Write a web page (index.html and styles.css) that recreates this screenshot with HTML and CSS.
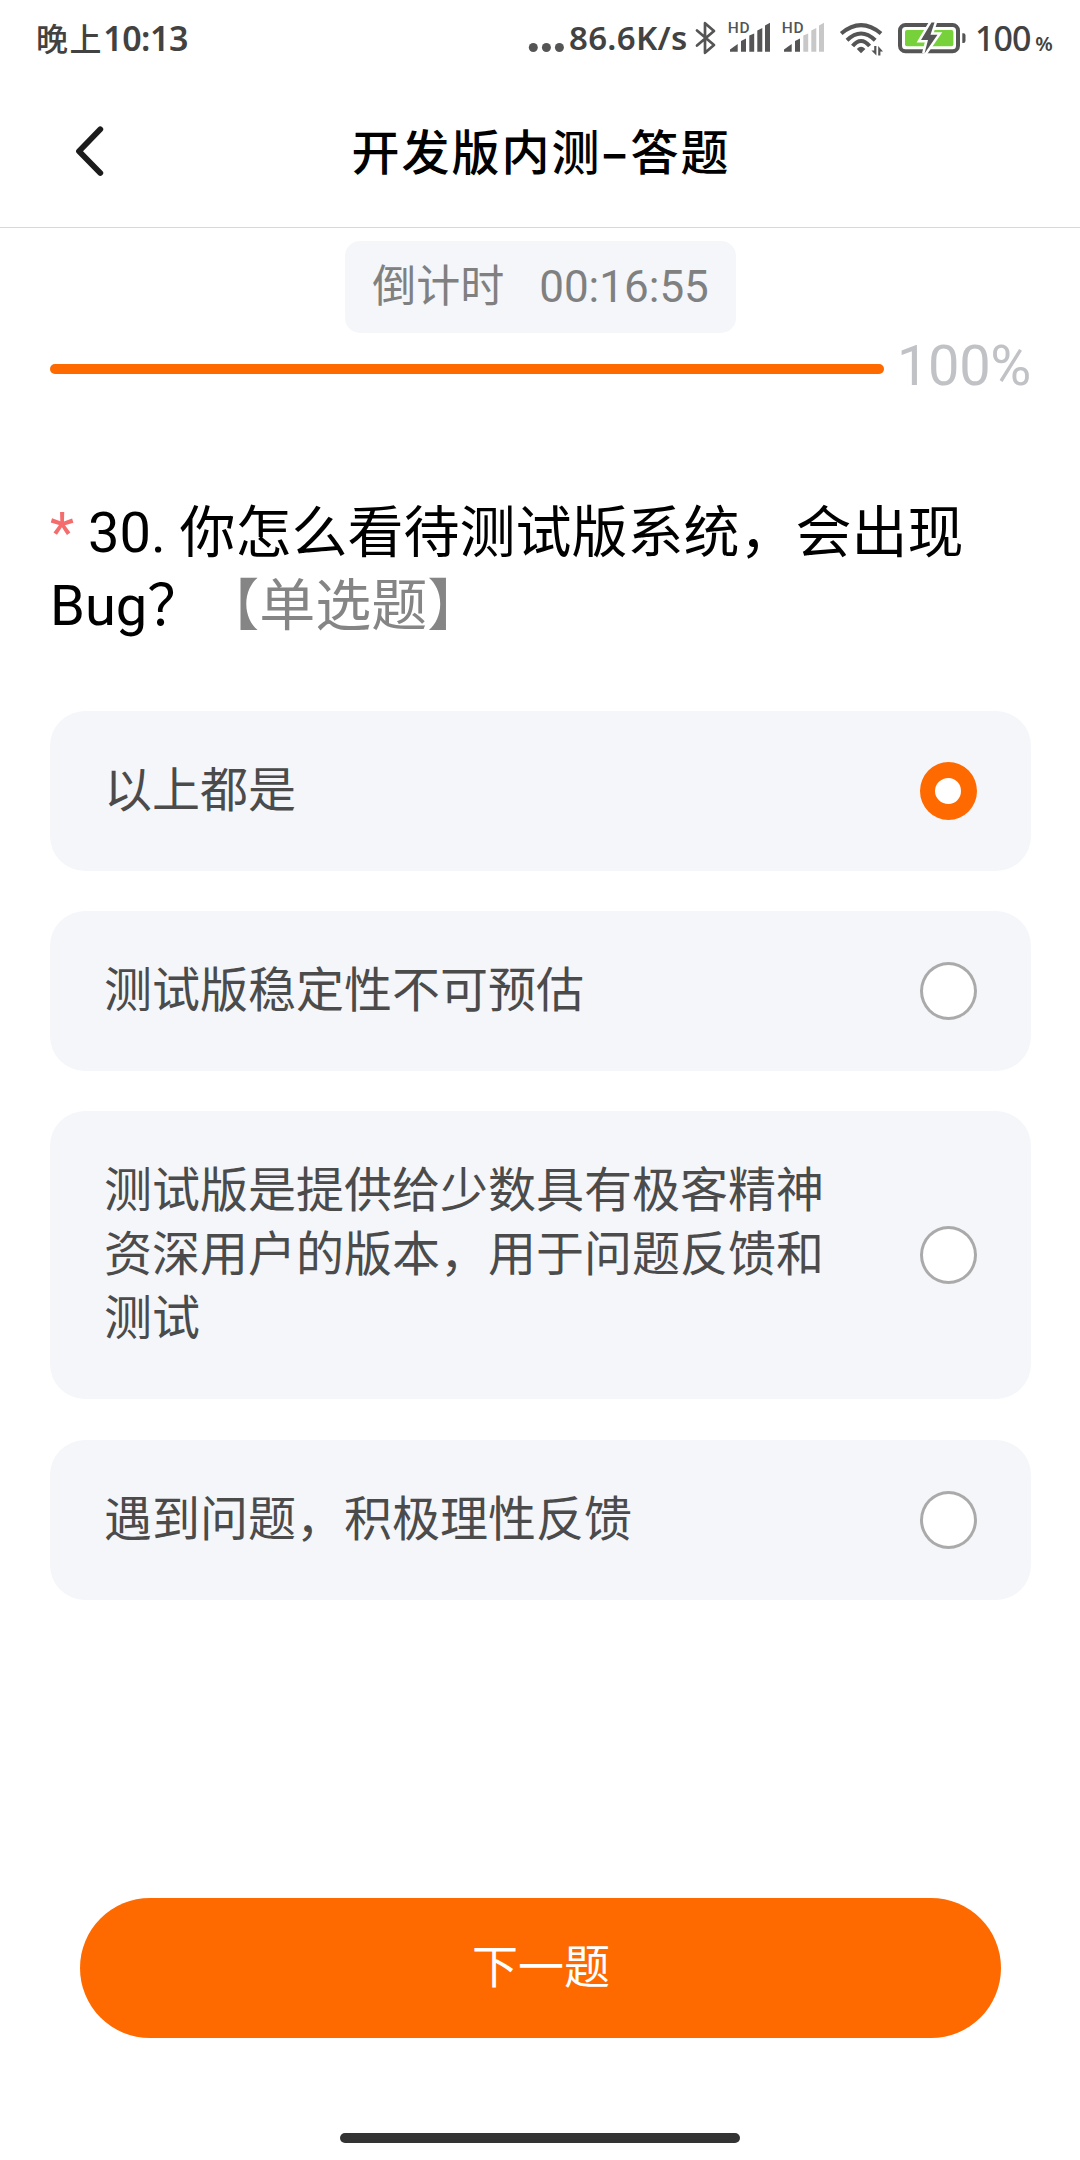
FILE: index.html
```html
<!DOCTYPE html>
<html lang="zh-CN">
<head>
<meta charset="utf-8">
<title>开发版内测–答题</title>
<link rel="stylesheet" href="styles.css">
</head>
<body>
<div class="screen">
  <div class="status">
    <span class="clock"><span class="clock-cn">晚上</span>10:13</span>
    <div class="status-right">
      <svg class="dots" width="37" height="80" viewBox="528 0 37 80"><g fill="#555"><circle cx="533.3" cy="47.5" r="4.5"/><circle cx="546.4" cy="47.5" r="4.5"/><circle cx="559.4" cy="47.5" r="4.5"/></g></svg>
      <span class="speed">86.6K/s</span>
      <svg class="icons" width="280" height="80" viewBox="690 0 280 80">
        <path d="M697 30.5 714 45 705 52.8V23.2L714 31 697 45.5" fill="none" stroke="#555" stroke-width="2.7" stroke-linejoin="round" stroke-linecap="round"/>
        <g fill="#555" class="hd"><text x="727.8" y="33">HD</text><text x="781.8" y="33">HD</text></g>
        <g fill="#555">
          <path d="M730 51.7V49.5L737.7 44V51.7ZM741 51.7V41L746 38.5V51.7ZM749.3 51.7V35.5L754.2 33.5V51.7ZM757.3 51.7V30.5L762.3 28V51.7ZM765 51.7V25.5L770 22.8V51.7Z"/>
          <path d="M784 51.7V49.5L791.7 44V51.7ZM795 51.7V41L800 38.5V51.7Z"/>
        </g>
        <path fill="#c8c8c8" d="M803.3 51.7V35.5L808.2 33.5V51.7ZM811.3 51.7V30.5L816.3 28V51.7ZM819 51.7V25.5L824 22.8V51.7Z"/>
        <g fill="none" stroke="#555" stroke-width="4">
          <path d="M841.2 33.5Q861 16.8 881 33.5"/>
          <path d="M847 40.2Q861 26.8 875.2 40.2"/>
          <path d="M852.6 46Q861 36 869.6 46"/>
        </g>
        <path d="M856.8 49Q861 44.6 865.4 49L861 53.3Z" fill="#555"/>
        <path d="M874.2 46H876.4V55.5L871.4 50.5H874.2ZM878.2 55.5H880.4V51.5H883L878.2 46Z" fill="#555"/>
        <rect x="900" y="25" width="58" height="26.2" rx="5.5" fill="none" stroke="#555" stroke-width="4"/>
        <rect x="905" y="30" width="48.4" height="16.2" rx="2" fill="#76d13b"/>
        <path d="M962.3 33.2H963.5Q965.5 33.2 965.5 35.5V40.5Q965.5 43 963.5 43H962.3Z" fill="#555"/>
        <path d="M931.5 22.5 921 40H928L924.5 53.5 937.5 34.8H930.5L934.5 22.5Z" fill="#555" stroke="#fff" stroke-width="5" paint-order="stroke"/>
      </svg>
      <span class="battery">100<span class="pct">%</span></span>
    </div>
  </div>
  <header class="nav">
    <svg class="back" width="40" height="60" viewBox="0 0 40 60"><path d="M30.3 9.3 9 31.2 30.3 53" fill="none" stroke="#1c1c1c" stroke-width="5.8" stroke-linecap="round" stroke-linejoin="round"/></svg>
    <h1 class="title">开发版内测<span class="dash">–</span>答题</h1>
  </header>
  <main class="content">
    <div class="timer"><span>倒计时</span><span>00:16:55</span></div>
    <div class="progress"><div class="track"><div class="fill" style="width:100%"></div></div><span class="percent">100%</span></div>
    <h2 class="question"><span class="required">*</span> 30. 你怎么看待测试版系统，会出现Bug？<span class="type">【单选题】</span></h2>
    <div class="options">
      <div class="option"><span class="label">以上都是</span><i class="radio checked"></i></div>
      <div class="option"><span class="label">测试版稳定性不可预估</span><i class="radio"></i></div>
      <div class="option"><span class="label">测试版是提供给少数具有极客精神资深用户的版本，用于问题反馈和测试</span><i class="radio"></i></div>
      <div class="option last"><span class="label">遇到问题，积极理性反馈</span><i class="radio"></i></div>
    </div>
  </main>
  <footer class="footer">
    <button class="next">下一题</button>
    <div class="home"></div>
  </footer>
</div>
</body>
</html>
```
FILE: styles.css
```css
* { box-sizing: border-box; }
body {
  margin: 0;
  background: #fff;
  font-family: Roboto, "Noto Sans CJK SC", sans-serif;
  text-spacing-trim: space-all;
}
.screen {
  width: 1080px;
  height: 2160px;
  display: flex;
  flex-direction: column;
  overflow: hidden;
}
.status {
  height: 80px;
  display: flex;
  justify-content: space-between;
  padding: 0 27px 0 36px;
  font-family: "Noto Sans", "Noto Sans CJK SC", sans-serif;
  font-weight: 600;
  color: #424242;
  line-height: 76px;
  white-space: nowrap;
}
.clock { font-size: 34px; letter-spacing: -0.5px; line-height: 74px; }
.clock-cn {
  font-family: "Noto Sans CJK SC", sans-serif;
  font-weight: 500;
  font-size: 32px;
  letter-spacing: 1.6px;
}
.status-right { display: flex; }
.speed { width: 125px; padding-left: 4px; font-size: 33px; letter-spacing: 0.3px; }
.icons { display: block; }
.hd { font: 500 15.5px Roboto, sans-serif; letter-spacing: 0.8px; }
.battery { width: 83px; padding-left: 5px; font-size: 34px; font-weight: 500; letter-spacing: -1px; }
.pct { font-size: 20px; font-weight: 600; margin-left: 5px; letter-spacing: 0; }
.nav {
  height: 148px;
  display: grid;
  grid-template-columns: 110px 1fr 110px;
  padding-top: 40px;
  border-bottom: 1px solid #d8d8d8;
}
.back { justify-self: end; }
.title {
  margin: -3px 0 0 2px;
  text-align: center;
  font: 500 48px/64px "Noto Sans CJK SC", sans-serif;
  letter-spacing: 2px;
  color: #000;
}
.dash { font-weight: 700; letter-spacing: 3px; }
.content { padding: 13px 49px 0 50px; }
.timer {
  width: 391px;
  height: 92px;
  margin: 0 auto;
  display: flex;
  justify-content: center;
  gap: 35px;
  background: #f4f6fa;
  border-radius: 15px;
  font-size: 44px;
  line-height: 92px;
  color: #808080;
}
.progress { display: flex; height: 66px; }
.track { width: 834px; height: 10px; margin-top: 31px; border-radius: 5px; background: #ebeef5; }
.fill { height: 100%; border-radius: 5px; background: #ff6a00; }
.percent { margin-left: 13px; font-size: 56px; line-height: 66px; letter-spacing: -0.4px; color: #c0c2c6; }
.question {
  margin: 98px 0 68px;
  font-size: 56px;
  font-weight: 400;
  line-height: 73px;
  color: #000;
}
.required { color: #f56c6c; }
.type { color: #858585; }
.options { display: flex; flex-direction: column; gap: 40px; }
.option {
  display: flex;
  align-items: center;
  justify-content: space-between;
  padding: 48px 54px;
  border-radius: 35px;
  background: #f4f6fa;
}
.option.last { margin-top: 1px; }
.label { width: 730px; font-size: 48px; line-height: 64px; color: #4b4b4b; }
.radio {
  width: 57px;
  height: 58px;
  border-radius: 50%;
  border: 3px solid #aaa;
  background: #fff;
}
.radio.checked { border: 16px solid #ff6a00; border-left-width: 15px; }
.footer {
  margin-top: auto;
  padding-bottom: 17px;
  display: flex;
  flex-direction: column;
  align-items: center;
}
.next {
  width: 921px;
  height: 140px;
  border: 0;
  padding: 0 0 2px 2px;
  border-radius: 70px;
  background: #ff6a00;
  color: #fff;
  font: 400 46px/64px Roboto, "Noto Sans CJK SC", sans-serif;
}
.home { width: 400px; height: 10px; margin-top: 95px; border-radius: 5px; background: #333; }
```
